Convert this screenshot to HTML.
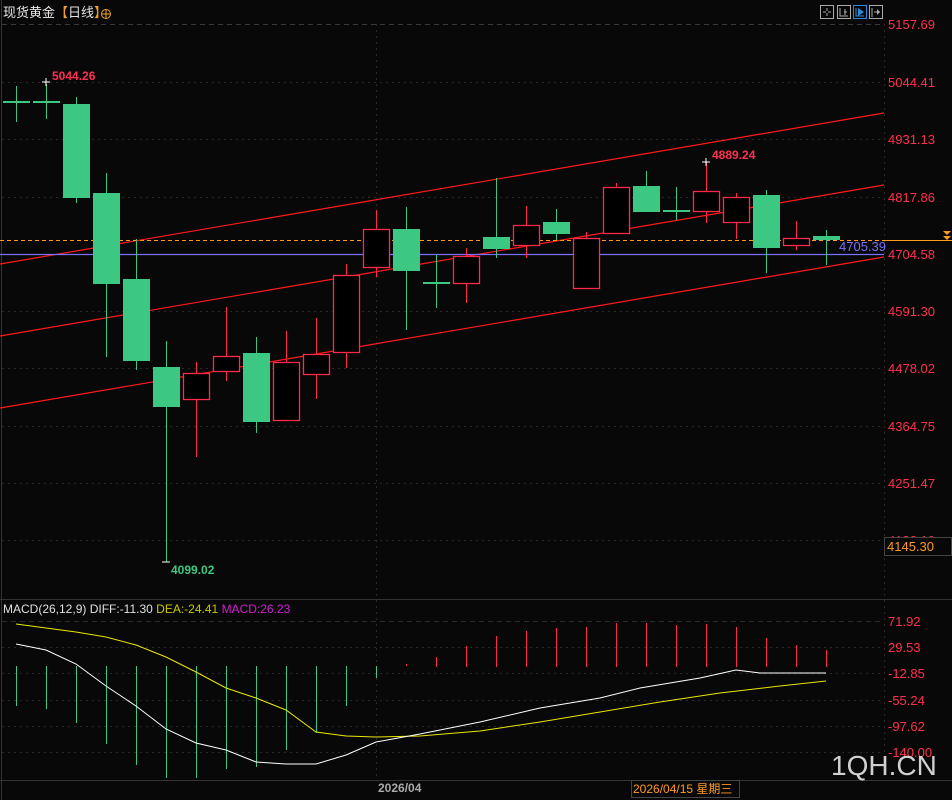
<!DOCTYPE html><html><head><meta charset="utf-8"><style>
html,body{margin:0;padding:0;background:#080808;}
svg{display:block}
text{font-family:"Liberation Sans","Noto Sans CJK SC",sans-serif;}
</style></head><body>
<svg width="952" height="800" viewBox="0 0 952 800" xmlns="http://www.w3.org/2000/svg">
<rect width="952" height="800" fill="#080808"/>
<line x1="1.5" y1="0" x2="1.5" y2="800" stroke="#333"/>
<!-- grid -->
<g stroke="#2a2a2a" stroke-dasharray="2,4">
<line x1="2" y1="24.5" x2="884" y2="24.5" stroke="#3a3a3a" stroke-dasharray="5,4"/>
<line x1="2" y1="82.5" x2="884" y2="82.5"/><line x1="2" y1="139.5" x2="884" y2="139.5"/>
<line x1="2" y1="197.5" x2="884" y2="197.5"/><line x1="2" y1="311.5" x2="884" y2="311.5"/>
<line x1="2" y1="368.5" x2="884" y2="368.5"/><line x1="2" y1="426.5" x2="884" y2="426.5"/>
<line x1="2" y1="483.5" x2="884" y2="483.5"/><line x1="2" y1="540.5" x2="884" y2="540.5"/>
<line x1="376.5" y1="24" x2="376.5" y2="780"/><line x1="884.5" y1="24" x2="884.5" y2="780"/>
<line x1="2" y1="621.5" x2="884" y2="621.5" stroke-dasharray="5,4"/><line x1="2" y1="647.5" x2="884" y2="647.5"/>
<line x1="2" y1="673.5" x2="884" y2="673.5"/><line x1="2" y1="700.5" x2="884" y2="700.5"/>
<line x1="2" y1="726.5" x2="884" y2="726.5"/><line x1="2" y1="752.5" x2="884" y2="752.5"/>
</g>
<line x1="0" y1="599.5" x2="952" y2="599.5" stroke="#333"/>
<line x1="0" y1="780.5" x2="952" y2="780.5" stroke="#333"/>
<!-- title -->
<text x="3" y="17" font-size="13" fill="#e8e8e8">现货黄金<tspan fill="#f0a020">【</tspan><tspan fill="#e0e0e0">日线</tspan><tspan fill="#f0a020">】</tspan></text>
<circle cx="106" cy="14" r="4.5" fill="none" stroke="#f0a020"/><line x1="101.5" y1="14" x2="110.5" y2="14" stroke="#f0a020"/><line x1="106" y1="9.5" x2="106" y2="18.5" stroke="#f0a020"/>
<!-- tool icons -->
<g fill="none" stroke="#aaa">
<rect x="820.5" y="5.5" width="13" height="13"/><rect x="837.5" y="5.5" width="13" height="13"/><rect x="853.5" y="5.5" width="13" height="13" stroke="#2a8ae0"/><rect x="869.5" y="5.5" width="13" height="13"/>
<path d="M827 8v3M827 13v3M823 12h3M828 12h3" /><path d="M840 8v8h8M845 9v6M847 12h-3"/><path d="M856 8v8h8" stroke="#2a8ae0"/><path d="M872 8v9M874 12h6"/>
</g>
<path d="M858 8l6 4-6 4z" fill="#2a8ae0"/><path d="M877 9l3 3-3 3z" fill="#aaa"/>
<!-- channel lines -->
<g stroke="#ff1a1a" stroke-width="1.2">
<line x1="0" y1="264" x2="884" y2="113"/><line x1="0" y1="336" x2="884" y2="185"/><line x1="0" y1="408" x2="884" y2="257"/>
</g>
<line x1="0" y1="240.5" x2="952" y2="240.5" stroke="#ff9a20" stroke-dasharray="4,3"/>
<line x1="884" y1="240.5" x2="952" y2="240.5" stroke="#ff9a20"/>
<line x1="0" y1="254.5" x2="884" y2="254.5" stroke="#7a70ff" stroke-width="1.2"/>
<!-- candles -->
<g>
<g stroke="#3cc882" stroke-width="1">
<line x1="16.5" y1="86" x2="16.5" y2="122"/><line x1="46.5" y1="84" x2="46.5" y2="119"/><line x1="76.5" y1="97" x2="76.5" y2="203"/>
<line x1="106.5" y1="173" x2="106.5" y2="357"/><line x1="136.5" y1="239" x2="136.5" y2="370"/><line x1="166.5" y1="341" x2="166.5" y2="562"/>
<line x1="256.5" y1="337" x2="256.5" y2="433"/><line x1="406.5" y1="207" x2="406.5" y2="330"/><line x1="436.5" y1="255" x2="436.5" y2="308"/>
<line x1="496.5" y1="178" x2="496.5" y2="258"/><line x1="556.5" y1="209" x2="556.5" y2="240"/><line x1="646.5" y1="171" x2="646.5" y2="212"/>
<line x1="676.5" y1="187" x2="676.5" y2="220"/><line x1="766.5" y1="190" x2="766.5" y2="273"/><line x1="826.5" y1="230" x2="826.5" y2="265"/>
</g>
<g fill="#3cc882">
<rect x="3" y="101" width="27" height="2"/><rect x="33" y="101" width="27" height="2"/><rect x="63" y="104" width="27" height="94"/>
<rect x="93" y="193" width="27" height="91"/><rect x="123" y="279" width="27" height="82"/><rect x="153" y="367" width="27" height="40"/>
<rect x="243" y="353" width="27" height="69"/><rect x="393" y="229" width="27" height="42"/><rect x="423" y="282" width="27" height="2"/>
<rect x="483" y="237" width="27" height="12"/><rect x="543" y="222" width="27" height="12"/><rect x="633" y="186" width="27" height="26"/>
<rect x="663" y="210" width="27" height="2"/><rect x="753" y="195" width="27" height="53"/><rect x="813" y="236" width="27" height="4"/>
</g>
<g stroke="#ff2a4a" stroke-width="1">
<line x1="196.5" y1="362" x2="196.5" y2="457"/><line x1="226.5" y1="307" x2="226.5" y2="381"/><line x1="286.5" y1="331" x2="286.5" y2="421"/>
<line x1="316.5" y1="318" x2="316.5" y2="399"/><line x1="346.5" y1="264" x2="346.5" y2="368"/><line x1="376.5" y1="210" x2="376.5" y2="277"/>
<line x1="466.5" y1="248" x2="466.5" y2="303"/><line x1="526.5" y1="206" x2="526.5" y2="258"/><line x1="586.5" y1="232" x2="586.5" y2="238"/>
<line x1="616.5" y1="183" x2="616.5" y2="187"/><line x1="706.5" y1="162" x2="706.5" y2="223"/><line x1="736.5" y1="193" x2="736.5" y2="239"/>
<line x1="796.5" y1="221" x2="796.5" y2="250"/>
</g>
<g fill="#000" stroke="#ff2a4a" stroke-width="1.3">
<rect x="183.5" y="373.5" width="26" height="26"/><rect x="213.5" y="356.5" width="26" height="15"/><rect x="273.5" y="362.5" width="26" height="58"/>
<rect x="303.5" y="354.5" width="26" height="20"/><rect x="333.5" y="275.5" width="26" height="77"/><rect x="363.5" y="229.5" width="26" height="38"/>
<rect x="453.5" y="256.5" width="26" height="27"/><rect x="513.5" y="225.5" width="26" height="20"/><rect x="573.5" y="238.5" width="26" height="50"/>
<rect x="603.5" y="187.5" width="26" height="46"/><rect x="693.5" y="191.5" width="26" height="20"/><rect x="723.5" y="197.5" width="26" height="25"/>
<rect x="783.5" y="238.5" width="26" height="7"/>
</g>
</g>
<!-- markers -->
<path d="M42 82h8M46 78v8" stroke="#fff"/><text x="52" y="80" font-size="12" font-weight="bold" fill="#ff3050">5044.26</text>
<path d="M702 162h8M706 158v8" stroke="#fff"/><text x="712" y="159" font-size="12" font-weight="bold" fill="#ff3050">4889.24</text>
<path d="M162 562h8" stroke="#fff"/><text x="171" y="574" font-size="12" font-weight="bold" fill="#3cc882">4099.02</text>
<!-- price axis -->
<g font-size="13" fill="#ff3050">
<text x="888" y="29">5157.69</text><text x="888" y="87">5044.41</text><text x="888" y="144">4931.13</text>
<text x="888" y="202">4817.86</text><text x="888" y="259">4704.58</text><text x="888" y="316">4591.30</text>
<text x="888" y="373">4478.02</text><text x="888" y="431">4364.75</text><text x="888" y="488">4251.47</text>
<text x="888" y="545">4138.19</text>
</g>
<text x="839" y="251" font-size="13" fill="#7a70ff">4705.39</text>
<path d="M943 231h8l-4 4zM943 236h8l-4 4z" fill="#ff9a20"/>
<rect x="884.5" y="537.5" width="67" height="18" fill="#080808" stroke="#444"/>
<text x="887" y="551" font-size="13" fill="#ff9a20">4145.30</text>
<!-- MACD -->
<text x="3" y="613" font-size="12" fill="#e0e0e0">MACD(26,12,9) DIFF:-11.30 <tspan fill="#c8c800">DEA:-24.41</tspan> <tspan fill="#d020d0">MACD:26.23</tspan></text>
<g stroke="#3cc882" stroke-width="1">
<line x1="16.5" y1="666" x2="16.5" y2="706"/><line x1="46.5" y1="666" x2="46.5" y2="709"/><line x1="76.5" y1="666" x2="76.5" y2="723"/>
<line x1="106.5" y1="666" x2="106.5" y2="744"/><line x1="136.5" y1="666" x2="136.5" y2="765"/><line x1="166.5" y1="666" x2="166.5" y2="778"/>
<line x1="196.5" y1="666" x2="196.5" y2="778"/><line x1="226.5" y1="666" x2="226.5" y2="769"/><line x1="256.5" y1="666" x2="256.5" y2="767"/>
<line x1="286.5" y1="666" x2="286.5" y2="750"/><line x1="316.5" y1="666" x2="316.5" y2="733"/><line x1="346.5" y1="666" x2="346.5" y2="706"/>
<line x1="376.5" y1="666" x2="376.5" y2="678"/>
</g>
<g stroke="#ff2a4a" stroke-width="1">
<line x1="406.5" y1="664" x2="406.5" y2="666"/><line x1="436.5" y1="657" x2="436.5" y2="667"/><line x1="466.5" y1="646" x2="466.5" y2="667"/>
<line x1="496.5" y1="636" x2="496.5" y2="667"/><line x1="526.5" y1="631" x2="526.5" y2="667"/><line x1="556.5" y1="628" x2="556.5" y2="667"/>
<line x1="586.5" y1="627" x2="586.5" y2="667"/><line x1="616.5" y1="623" x2="616.5" y2="667"/><line x1="646.5" y1="623" x2="646.5" y2="667"/>
<line x1="676.5" y1="625" x2="676.5" y2="667"/><line x1="706.5" y1="624" x2="706.5" y2="667"/><line x1="736.5" y1="627" x2="736.5" y2="667"/>
<line x1="766.5" y1="638" x2="766.5" y2="667"/><line x1="796.5" y1="645" x2="796.5" y2="667"/><line x1="826.5" y1="650" x2="826.5" y2="667"/>
</g>
<polyline fill="none" stroke="#e8e800" stroke-width="1" points="16,624 46,628 76,632 106,637 136,645 166,657 196,672 226,688 256,698 286,710 316,732 346,736 376,737 420,736 480,731 540,722 600,712 660,702 720,693 780,686 826,681"/>
<polyline fill="none" stroke="#ffffff" stroke-width="1" points="16,644 46,650 76,664 106,686 136,706 166,729 196,743 226,750 256,762 286,764 316,764 346,755 376,742 420,734 480,722 540,708 600,698 640,688 700,678 736,670 760,673 826,673"/>
<g font-size="13" fill="#ff3050">
<text x="888" y="626">71.92</text><text x="888" y="652">29.53</text><text x="888" y="678">-12.85</text>
<text x="888" y="705">-55.24</text><text x="888" y="731">-97.62</text><text x="888" y="757">-140.00</text>
</g>
<text x="831" y="775" font-size="28" fill="#d0d0d0">1QH.CN</text>
<!-- time axis -->
<text x="378" y="792" font-size="12" font-weight="bold" fill="#aaaaaa">2026/04</text>
<rect x="631.5" y="780.5" width="108" height="17" fill="#080808" stroke="#444"/>
<text x="633" y="793" font-size="12" fill="#ff9a20">2026/04/15 星期三</text>
</svg>
</body></html>
